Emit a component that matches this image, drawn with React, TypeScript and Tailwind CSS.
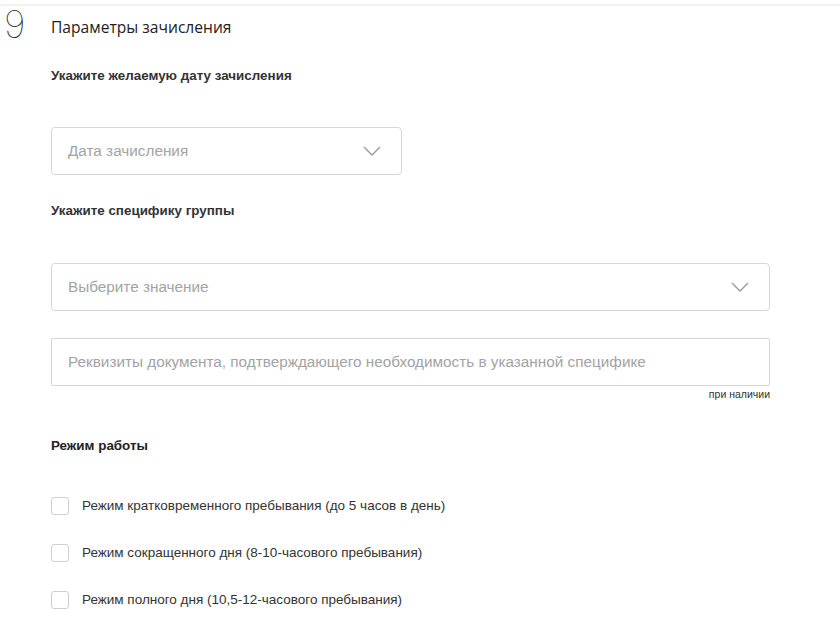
import React from 'react'

const arial = { fontFamily: '"Liberation Sans", Arial, sans-serif' }

function Chevron() {
    return (
        <svg width="18" height="10" viewBox="0 0 18 10" fill="none">
            <path d="M1 1l8 8 8-8" stroke="#9a9a9a" strokeWidth="1.4" />
        </svg>
    )
}

function Select({ placeholder, className }: { placeholder: string; className: string }) {
    return (
        <div
            className={`flex h-[48px] items-center justify-between rounded-[4px] border border-[#d6d6d6] pl-[16px] pr-[20px] ${className}`}
        >
            <span className="text-[15.3px] text-[#a3a3a3]">{placeholder}</span>
            <Chevron />
        </div>
    )
}

function Check({ label, className }: { label: string; className: string }) {
    return (
        <label className={`flex h-[18px] items-center ${className}`}>
            <span className="h-[18px] w-[18px] rounded-[3px] border border-[#cfcfcf] bg-white" />
            <span className="ml-[13px] text-[13.5px] text-[#333]">{label}</span>
        </label>
    )
}

export default function App() {
    return (
        <div className="h-[619px] w-[840px] overflow-hidden bg-white" style={arial}>
            <div className="mt-[4px] h-[2px] bg-[#f1f1f1]" />
            <div className="flex">
                {/* step number */}
                <div className="w-[51px] shrink-0">
                    <div
                        className="-mt-[4px] pl-[4px] text-[38px] font-thin leading-[44px] text-[#222]"
                        style={{ fontFamily: 'Inter, sans-serif' }}
                    >
                        9
                    </div>
                </div>
                <div className="flex w-[719px] flex-col">
                    <h2
                        className="mt-[11px] h-[20px] text-[15.6px] leading-[20px] text-[#222]"
                        style={{ fontFamily: '"Open Sans", sans-serif' }}
                    >
                        Параметры зачисления
                    </h2>
                    <p className="mt-[31px] h-[16px] text-[13.4px] font-bold leading-[16px] text-[#333]">
                        Укажите желаемую дату зачисления
                    </p>
                    <Select placeholder="Дата зачисления" className="mt-[43px] w-[351px]" />
                    <p className="mt-[28px] h-[16px] text-[13.4px] font-bold leading-[16px] text-[#333]">
                        Укажите специфику группы
                    </p>
                    <Select placeholder="Выберите значение" className="mt-[44px] w-full" />
                    <div className="mt-[27px] flex h-[48px] items-center rounded-[2px] border border-[#d6d6d6] pl-[16px]">
                        <span className="text-[15.3px] text-[#a3a3a3]">
                            Реквизиты документа, подтверждающего необходимость в указанной специфике
                        </span>
                    </div>
                    <p className="mt-[2px] h-[12px] text-right text-[10.5px] leading-[12px] text-[#333]">
                        при наличии
                    </p>
                    <p className="mt-[38px] h-[16px] text-[13.4px] font-bold leading-[16px] text-[#222]">
                        Режим работы
                    </p>
                    <Check className="mt-[43px]" label="Режим кратковременного пребывания (до 5 часов в день)" />
                    <Check className="mt-[29px]" label="Режим сокращенного дня (8-10-часового пребывания)" />
                    <Check className="mt-[29px]" label="Режим полного дня (10,5-12-часового пребывания)" />
                </div>
            </div>
        </div>
    )
}
